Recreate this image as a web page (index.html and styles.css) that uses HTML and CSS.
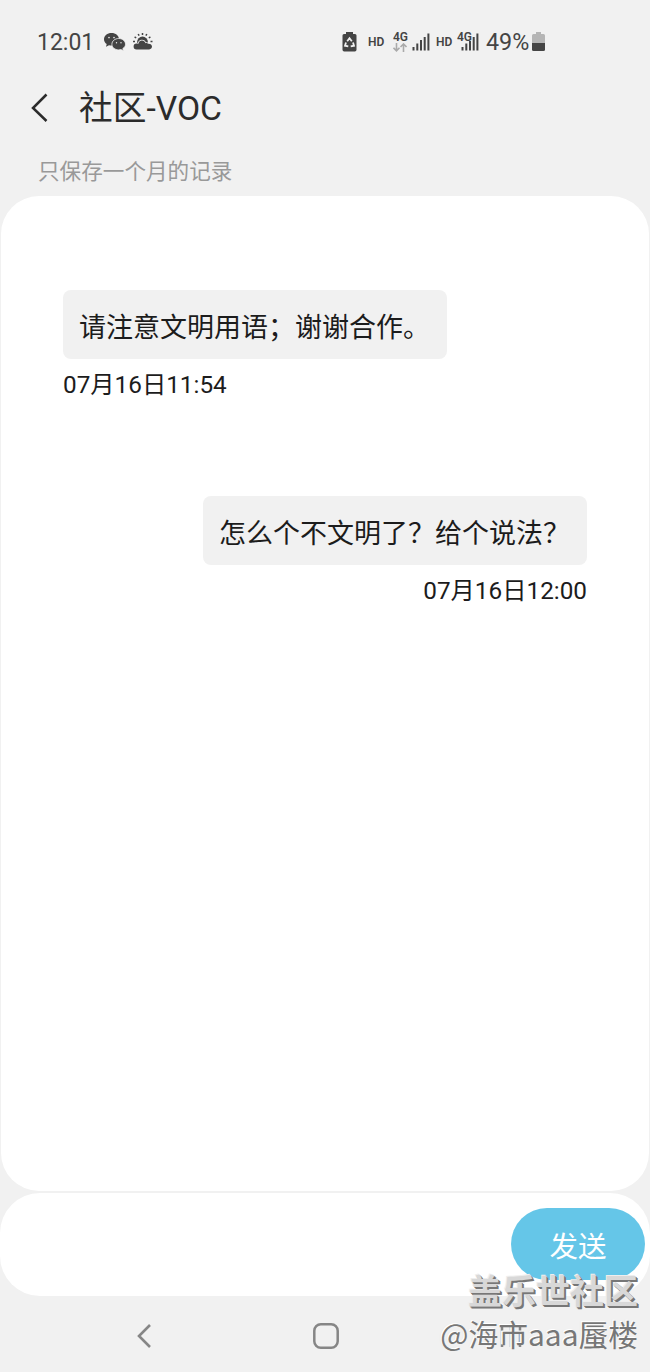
FILE: index.html
```
<!DOCTYPE html>
<html lang="zh-CN">
<head>
    <meta charset="UTF-8">
    <meta name="viewport" content="width=device-width, initial-scale=1.0">
    <title>社区-VOC</title>
    <link rel="stylesheet" href="styles.css">
</head>
<body>
    <div class="statusbar">
        <span class="clock">12:01</span>
        <svg class="wechat" width="22" height="18" viewBox="0 0 22 18">
            <path fill="#444" d="M7.500 0C3.300 0 0 2.700 0 6.200c0 2 1.100 3.700 2.700 4.900L2 13.700l3-1.500c.9.3 1.700.4 2.500.4 4.200 0 7.500-2.900 7.500-6.400S11.700 0 7.500 0z"/>
            <path fill="#444" stroke="#f1f1f1" stroke-width=".8" d="M14.700 5.500c-3.800 0-6.800 2.500-6.800 5.700s3 5.700 6.800 5.700c.8 0 1.600-.1 2.300-.3l2.400 1.200-.6-2.200c1.600-1 2.700-2.600 2.700-4.400 0-3.200-3-5.700-6.800-5.700z"/>
            <circle cx="5" cy="4.600" r=".8" fill="#f1f1f1"/><circle cx="10" cy="4.600" r=".8" fill="#f1f1f1"/>
            <circle cx="12.500" cy="9.800" r=".7" fill="#f1f1f1"/><circle cx="17" cy="9.800" r=".7" fill="#f1f1f1"/>
        </svg>
        <svg class="weather" width="20" height="17" viewBox="0 0 20 17">
            <path d="M9.500 0v1.900M5.200 1l.9 1.700M13.800 1l-.9 1.700M1.600 3.900l1.600 1.100M17.400 3.900l-1.600 1.100M0 8.500h2M17.500 8.500h2" stroke="#444" stroke-width="1.500"/>
            <circle cx="9.500" cy="9" r="5.400" fill="#444"/>
            <path d="M3.500 16.400a2.900 2.900 0 0 1 0-5.800c.8 0 1.200.1 1.700.4 1-4.400 5.900-4.600 7.300-.8 1-.5 2-.2 2.600.5 2.200-.2 3.900.9 3.900 2.900 0 1.600-1.200 2.800-2.800 2.800z" fill="#444" stroke="#f1f1f1" stroke-width="1.400" paint-order="stroke"/>
        </svg>
        <svg class="saver" width="15" height="20" viewBox="0 0 15 20">
            <path d="M4 0h7v2h2q1.500 0 1.500 1.500v14.300q0 1.700-1.700 1.700H2.200Q.5 19.500.5 17.800V3.500Q.5 2 2 2h2z" fill="#444"/>
            <path d="M5.200 9.200l2.300-3 2.300 3M11 10.500l1 3.200-3.300.7M6.300 14.400L3 13.700l1-3.200" fill="none" stroke="#f1f1f1" stroke-width="1.800"/>
        </svg>
        <b class="hd">HD</b>
        <div class="net">
            <b>4G</b>
            <svg width="14" height="9" viewBox="0 0 14 9"><path d="M3.500 0v7.500M.5 4.800l3 3 3-3M10.500 9V1M7.500 4l3-3 3 3" fill="none" stroke="#aaa" stroke-width="1.600"/></svg>
        </div>
        <svg class="signal" width="18" height="18" viewBox="0 0 18 18"><path d="M1.500 14v3.500M5.300 10.500v7M9 7v10.500M12.700 4v13.500M16.400.5v17" stroke="#444" stroke-width="2"/></svg>
        <b class="hd hd2">HD</b>
        <div class="net net2">
            <b>4G</b>
            <svg class="signal2" width="18" height="18" viewBox="0 0 18 18"><path d="M1.500 14v3.500M5.300 10.500v7M9 8v9.500M12.700 4v13.500M16.400.5v17" stroke="#444" stroke-width="2"/></svg>
        </div>
        <span class="percent">49%</span>
        <svg class="battery" width="13" height="20" viewBox="0 0 13 20">
            <path d="M4 0h5v2h2.500Q13 2 13 3.500V11H0V3.500Q0 2 1.500 2H4z" fill="#b5b5b5"/>
            <path d="M0 11h13v6.500q0 1.500-1.500 1.500h-10Q0 19 0 17.500z" fill="#444"/>
        </svg>
    </div>

    <div class="header">
        <svg width="18" height="30" viewBox="0 0 18 30"><path d="M16.500 1.500L3 15l13.500 13" fill="none" stroke="#2b2b2b" stroke-width="2.500"/></svg>
        <h1>社区-VOC</h1>
    </div>
    <p class="tip">只保存一个月的记录</p>

    <div class="chat">
        <div class="message">
            <div class="bubble">请注意文明用语；谢谢合作。</div>
            <div class="time">07月16日11:54</div>
        </div>
        <div class="message mine">
            <div class="bubble">怎么个不文明了？给个说法？</div>
            <div class="time">07月16日12:00</div>
        </div>
    </div>

    <div class="inputbar">
        <button>发送</button>
    </div>

    <div class="navbar">
        <svg width="16" height="26" viewBox="0 0 16 26"><path d="M14 2L3 13l11 11" fill="none" stroke="#868686" stroke-width="2.600"/></svg>
        <svg width="26" height="26" viewBox="0 0 26 26"><rect x="1.300" y="1.300" width="23.400" height="23.400" rx="6.500" fill="none" stroke="#868686" stroke-width="2.500"/></svg>
        <svg width="22" height="22" viewBox="0 0 22 22"><path d="M2 0v22M11 0v22M20 0v22" stroke="#868686" stroke-width="2.500"/></svg>
    </div>

    <div class="watermark">
        <div class="site">盖乐世社区</div>
        <div class="user">@海市aaa蜃楼</div>
    </div>
</body>
</html>
```
FILE: styles.css
```
*{
    margin:0;
    padding:0;
    box-sizing: border-box;
}
body{
    position: relative;
    width:650px;
    height:1372px;
    overflow: hidden;
    background-color: #f1f1f1;
    font-family: Roboto, "Noto Sans CJK SC", sans-serif;
    color:#1c1c1c;
}
svg{
    display:block;
    flex:none;
}
.statusbar{
    display:flex;
    align-items: center;
    height:83px;
    padding-left:37px;
    color:#444;
}
.clock{
    width:67px;
    padding-top:2px;
    font-size: 23px;
}
.weather{
    margin-left:7px;
}
.saver{
    margin-left:189px;
}
.hd{
    width:25px;
    margin-left:11px;
    font-size: 12px;
    font-weight: 600;
}
.net{
    width:19px;
    height:22px;
    font-size: 12px;
    line-height: 12px;
}
.net b{
    display:block;
    font-weight: 600;
}
.hd2{
    width:21px;
    margin-left:6px;
}
.net2{
    position: relative;
    width:23px;
}
.signal2{
    position: absolute;
    left:4px;
    top:2px;
}
.percent{
    width:46px;
    margin-left:6px;
    font-size: 23.3px;
}
.header{
    display:flex;
    align-items: center;
    height:50px;
    padding-left:30px;
}
.header h1{
    margin-left:31px;
    padding-top:2px;
    font-size: 33.7px;
    line-height: 50px;
    font-weight: 400;
    color:#2b2b2b;
}
.tip{
    height:63px;
    padding-left:38px;
    font-size: 21.6px;
    line-height: 77px;
    color:#999;
}
.chat{
    height:995px;
    margin:0 1px;
    padding:94px 62px 0;
    border-radius: 38px;
    background-color: #fff;
}
.message{
    display:flex;
    flex-direction: column;
    align-items: flex-start;
    height:206px;
}
.mine{
    align-items: flex-end;
}
.bubble{
    height:69px;
    padding:0 17px 0 16px;
    border-radius: 8px;
    background-color: #f1f1f1;
    font-size: 27px;
    line-height: 77px;
}
.time{
    font-size: 24.3px;
    line-height: 30px;
    margin-top:11px;
}
.inputbar{
    display:flex;
    justify-content: flex-end;
    height:103px;
    margin-top:2px;
    padding:15px 5px 0 0;
    border-radius: 40px;
    background-color: #fff;
}
button{
    width:134px;
    height:72px;
    border:none;
    border-radius: 36px;
    background-color: #65c6e8;
    color:white;
    font-family: inherit;
    font-size: 28.5px;
}
.navbar{
    display:flex;
    align-items: center;
    gap:161px;
    height:80px;
    padding-left:136px;
}
.watermark{
    position: absolute;
    right:12px;
    top:1268px;
    text-align: right;
    white-space: nowrap;
    font-family: "Noto Sans CJK SC", sans-serif;
}
.site{
    font-size: 34px;
    line-height: 44px;
    font-weight: 700;
    color:#d8d8d8;
    text-shadow:1px 1px #777, 2px 2px #777, -1px -1px #eee;
}
.user{
    font-size: 29.8px;
    line-height: 43px;
    color:#777;
    text-shadow:-1px -1px #fff, -2px -1px #eee;
}
```
